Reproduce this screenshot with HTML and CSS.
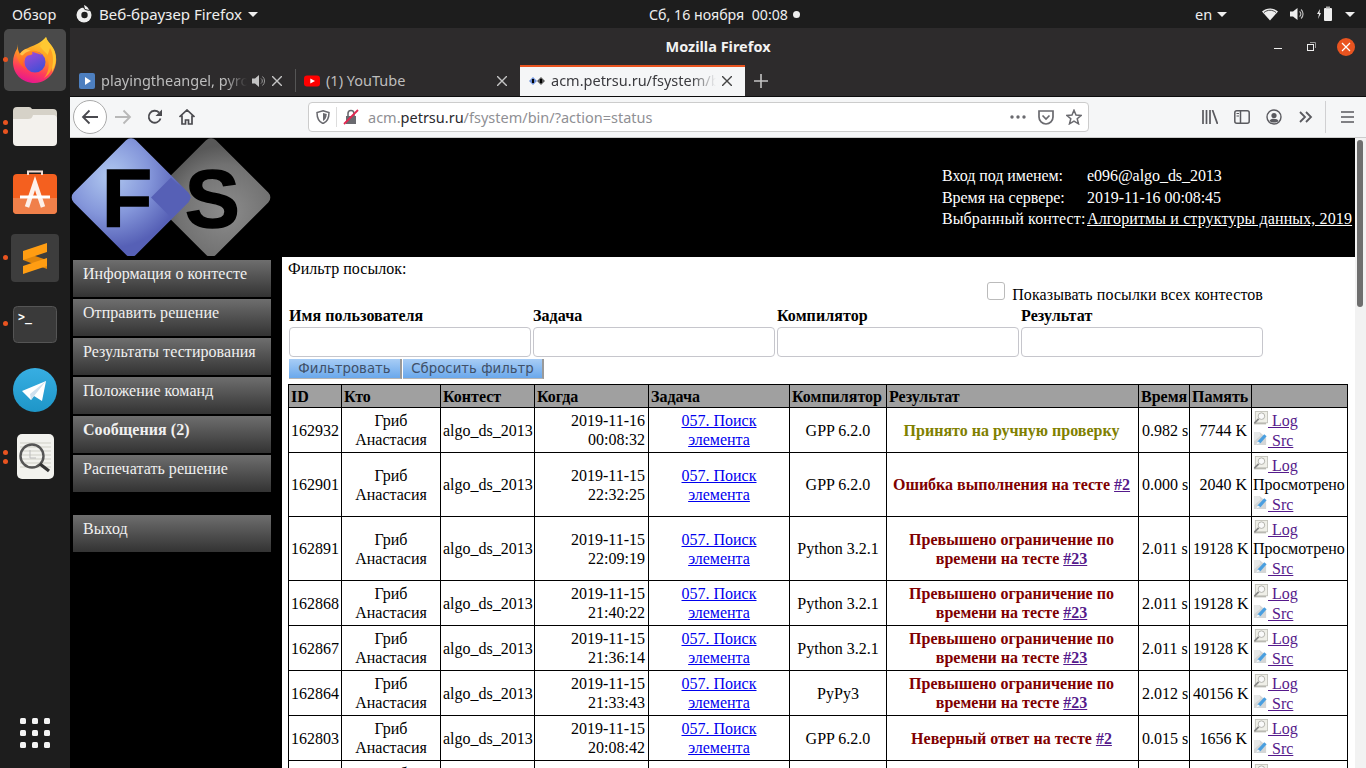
FILE: index.html
```html
<!doctype html>
<html lang="ru">
<head>
	<meta charset="UTF-8">
	<title>Mozilla Firefox</title>
	<link rel="stylesheet" href="styles.css">
</head>
<body>
<!-- shared page icons -->
<svg class="sprite" width="0" height="0">
	<symbol id="ico-log" viewBox="0 0 16 16">
		<rect x="2.5" y="0.5" width="13" height="12" fill="#efefe8" stroke="#c4c4bc"/>
		<circle cx="9" cy="5.500" r="3.500" fill="#fafafa" stroke="#b0b0aa"/>
		<path d="M1 13.500h13" stroke="#b9b9b2" stroke-width="1.500"/>
		<path d="M6 8.500 1.500 13" stroke="#858585" stroke-width="1.800"/>
	</symbol>
	<symbol id="ico-src" viewBox="0 0 16 16">
		<path d="M1 1h6l7 6v8H1z" fill="#d4d6d6"/>
		<path d="M1 1h6l1 4-7 6z" fill="#e6e8e8"/>
		<path d="M5 11 12 3.500l2.500 2L8 13l-3.500 1z" fill="#4a9fe0"/>
		<path d="M3.500 14.500 5 11l3 2z" fill="#f4f4f4"/>
	</symbol>
</svg>

<!-- ubuntu top panel -->
<div class="panel">
	<div class="panel-left">
		<span class="overview">Обзор</span>
		<svg class="app-ico" width="18" height="18" viewBox="0 0 18 18"><circle cx="9" cy="10" r="7.5" fill="#eee"/><circle cx="9.5" cy="10" r="3.2" fill="#1d1d1d"/><path d="M7 1c3 0 7 1 8 5l-5-1z" fill="#1d1d1d"/><path d="M9 0c2 1 4 2 5 5l-4-1z" fill="#eee"/></svg>
		<span class="app-name">Веб-браузер Firefox</span>
		<span class="caret"></span>
	</div>
	<div class="panel-clock">Сб, 16 ноября&nbsp; 00:08<span class="clock-dot"></span></div>
	<div class="panel-right">
		<span class="lang">en</span>
		<span class="caret caret-lang"></span>
		<svg class="tray-wifi" width="16" height="14" viewBox="0 0 16 14"><path d="M0 4.500C4.500.5 11.500.5 16 4.500L8 13.500z" fill="#eee"/><path d="M2 5.500c3.500-3 8.500-3 12 0" fill="none" stroke="#1d1d1d" stroke-width=".8"/></svg>
		<svg class="tray-vol" width="16" height="14" viewBox="0 0 16 14"><path d="M0 4.500h3L7.500 1v12L3 9.500H0z" fill="#eee"/><path d="M9.500 4.500a3 3 0 0 1 0 5M11 2.500a6 6 0 0 1 0 9" fill="none" stroke="#bbb" stroke-width="1.200"/></svg>
		<svg class="tray-bat" width="16" height="16" viewBox="0 0 16 16"><path d="M3 3 0 8h2l-1 5 3-6H2.500z" fill="#eee"/><rect x="7" y="2" width="8" height="13" rx="1" fill="#eee"/><rect x="9" y="0.500" width="4" height="2" fill="#aaa"/></svg>
		<span class="caret caret-end"></span>
	</div>
</div>

<div class="desk">
	<!-- dock -->
	<div class="dock">
		<div class="dock-item dock-active">
			<span class="pip"></span>
			<svg width="46" height="48" viewBox="0 0 46 48">
				<defs>
					<linearGradient id="ff-out" x1=".7" y1="0" x2=".4" y2="1"><stop offset="0" stop-color="#ffd83a"/><stop offset=".42" stop-color="#ff9a1e"/><stop offset=".75" stop-color="#ff3b5c"/><stop offset="1" stop-color="#e5178f"/></linearGradient>
					<linearGradient id="ff-in" x1=".2" y1="0" x2=".7" y2="1"><stop offset="0" stop-color="#a04bd8"/><stop offset="1" stop-color="#3f4fd6"/></linearGradient>
					<linearGradient id="ff-fox" x1=".3" y1="0" x2=".5" y2="1"><stop offset="0" stop-color="#ffa52a"/><stop offset="1" stop-color="#ff5220"/></linearGradient>
				</defs>
				<path d="M34 1c1 5 7 8 9 15 4 12-2 30-20 31C9 47 1 37 1 26c0-5 2-10 4-13 0 3 1 5 2 6 3-5 7-6 11-8 5-2 11-4 16-10z" fill="url(#ff-out)"/>
				<path d="M34 1c1 5 7 9 9 16 2 7 0 14-3 19 1-8-1-15-7-20-2-2-4-4-5-6 3-2 5-5 6-9z" fill="#ffc832"/>
				<path d="M38 12c3 5 4 12 2 20-2 5-5 8-8 10 5-6 6-14 3-21z" fill="#ff9f24"/>
				<circle cx="23" cy="26" r="10.500" fill="url(#ff-in)"/>
				<path d="M6 8c-1 3 0 7 2 10 2-3 4-4 6-5 3 1 5 2 7 3l9 3c-3-4-8-5-11-4 2 2 2 3 0 4-3 0-5 1-6 3-4 5-1 9 3 12C8 31 2 21 6 8z" fill="url(#ff-fox)"/>
				<path d="M8 18c2-3 4-4 6-5 2 1 4 1 5 2-3 0-5 1-8 4-1 1-2 0-3-1z" fill="#ffc24a"/>
			</svg>
		</div>
		<div class="dock-item">
			<span class="pip pip-two"></span>
			<svg width="46" height="42" viewBox="0 0 46 42">
				<path d="M1 6a4 4 0 0 1 4-4h12a4 4 0 0 1 3 2h21a4 4 0 0 1 4 4v8H1z" fill="#d6d2c8"/>
				<path d="M1 14h15c3 0 4-1 5-4h20a4 4 0 0 1 4 4v23a4 4 0 0 1-4 4H5a4 4 0 0 1-4-4z" fill="#f3f1ed"/>
			</svg>
		</div>
		<div class="dock-item">
			<svg width="46" height="44" viewBox="0 0 46 44">
				<rect x="1" y="4" width="44" height="40" rx="4" fill="#f4601f"/>
				<path d="M1 28h44v12a4 4 0 0 1-4 4H5a4 4 0 0 1-4-4z" fill="#f0804a"/>
				<path d="M16 5V1.500h14V5" fill="none" stroke="#f2dcd2" stroke-width="2"/>
				<path d="M15 37 23 13l8 24" fill="none" stroke="#fdf0ea" stroke-width="4.500"/>
				<path d="M8 27h30" stroke="#fff" stroke-width="3"/>
			</svg>
		</div>
		<div class="dock-item">
			<span class="pip"></span>
			<svg width="48" height="48" viewBox="0 0 48 48">
				<rect width="48" height="48" rx="4" fill="#3d3d3d"/>
				<path d="M12 18 36 26v9L12 26z" fill="#e0860c"/>
				<path d="M12 17 36 9v9L12 26z" fill="#ff9d12"/>
				<path d="M12 32 36 24v8L12 40z" fill="#ff9d12"/>
			</svg>
		</div>
		<div class="dock-item">
			<span class="pip"></span>
			<svg width="44" height="37" viewBox="0 0 44 37">
				<rect x=".5" y=".5" width="43" height="36" rx="4" fill="#3a3a3a" stroke="#555"/>
				<text x="5" y="15" class="term-text">&gt;_</text>
			</svg>
		</div>
		<div class="dock-item">
			<svg width="44" height="44" viewBox="0 0 44 44">
				<defs><linearGradient id="tg" x1="0" y1="0" x2="0" y2="1"><stop offset="0" stop-color="#37aee2"/><stop offset="1" stop-color="#1e96c8"/></linearGradient></defs>
				<circle cx="22" cy="22" r="22" fill="url(#tg)"/>
				<path d="M9 23 33 13l-4 20-8-5-3 4z" fill="#fff"/>
				<path d="M17 26 33 13 21 28l-3 4z" fill="#cfe0ee"/>
			</svg>
		</div>
		<div class="dock-item">
			<span class="pip pip-two"></span>
			<svg width="37" height="45" viewBox="0 0 37 45">
				<rect width="37" height="45" rx="5" fill="#f2f2ee"/>
				<path d="M3 9h31M3 13h31M3 17h31M3 21h31M3 25h31M3 29h31M3 33h31" stroke="#cfcfc6"/>
				<circle cx="15" cy="22" r="11.500" fill="none" stroke="#555" stroke-width="2.400"/>
				<path d="M23 30l9 7" stroke="#333" stroke-width="3.200"/>
				<path d="M13 16v8h6" fill="none" stroke="#bbb"/>
			</svg>
		</div>
		<div class="dock-item dock-apps">
			<svg width="30" height="30" viewBox="0 0 30 30" fill="#f4f4f4">
				<rect width="6" height="6" rx="1.500"/><rect x="12" width="6" height="6" rx="1.500"/><rect x="24" width="6" height="6" rx="1.500"/>
				<rect y="12" width="6" height="6" rx="1.500"/><rect x="12" y="12" width="6" height="6" rx="1.500"/><rect x="24" y="12" width="6" height="6" rx="1.500"/>
				<rect y="24" width="6" height="6" rx="1.500"/><rect x="12" y="24" width="6" height="6" rx="1.500"/><rect x="24" y="24" width="6" height="6" rx="1.500"/>
			</svg>
		</div>
	</div>

	<!-- firefox window -->
	<div class="ff">
		<div class="titlebar">
			<span></span>
			<span class="win-title">Mozilla Firefox</span>
			<div class="win-btns">
				<span class="win-min"></span>
				<svg class="win-max" width="9" height="9" viewBox="0 0 9 9"><rect x=".5" y="2.500" width="6" height="6" fill="none" stroke="#eee"/><path d="M3 .5h5.500V6" fill="none" stroke="#999"/></svg>
				<span class="win-close">
					<svg width="10" height="10" viewBox="0 0 10 10"><path d="M1 1l8 8M9 1 1 9" stroke="#fff" stroke-width="1.200"/></svg>
				</span>
			</div>
		</div>
		<div class="tabs">
			<div class="tab">
				<svg width="16" height="16" viewBox="0 0 16 16"><rect width="16" height="16" rx="2" fill="#4d7fc0"/><path d="M6 4l6 4-6 4z" fill="#fff"/></svg>
				<span class="tab-label">playingtheangel, pyrokinesis</span>
				<svg class="tab-sound" width="14" height="14" viewBox="0 0 14 14"><path d="M0 4.500h3L7 1v12L3 9.500H0z" fill="#c4c4c4"/><path d="M9 4.500a3 3 0 0 1 0 5M10.500 2.500a6 6 0 0 1 0 9" fill="none" stroke="#999"/></svg>
				<svg class="tab-x" width="10" height="10" viewBox="0 0 10 10"><path d="M0 0l10 10M10 0 0 10" stroke="#c4c4c4" stroke-width="1.400"/></svg>
			</div>
			<div class="tab tab-sep">
				<svg width="16" height="16" viewBox="0 0 16 16"><rect y="2.500" width="16" height="11" rx="3" fill="#f00"/><path d="M6.300 5.500 11 8l-4.700 2.500z" fill="#fff"/></svg>
				<span class="tab-label">(1) YouTube</span>
				<svg class="tab-x" width="10" height="10" viewBox="0 0 10 10"><path d="M0 0l10 10M10 0 0 10" stroke="#c4c4c4" stroke-width="1.400"/></svg>
			</div>
			<div class="tab tab-on">
				<svg width="16" height="16" viewBox="0 0 16 16"><path d="M0 8l4-4 4 4-4 4z" fill="#6d8fd8"/><path d="M8 8l4-4 4 4-4 4z" fill="#5c5c5c"/><rect x="3" y="6" width="2" height="4"/><rect x="11" y="6" width="2" height="4"/></svg>
				<span class="tab-label">acm.petrsu.ru/fsystem/bin/?action=status</span>
				<svg class="tab-x" width="10" height="10" viewBox="0 0 10 10"><path d="M0 0l10 10M10 0 0 10" stroke="#444" stroke-width="1.400"/></svg>
			</div>
			<svg class="tab-new" width="14" height="14" viewBox="0 0 14 14"><path d="M7 0v14M0 7h14" stroke="#c4c4c4" stroke-width="1.600"/></svg>
		</div>
		<div class="nav">
			<div class="nav-back">
				<svg width="18" height="16" viewBox="0 0 18 16"><path d="M17 8H2M8.500 1.500 2 8l6.500 6.500" fill="none" stroke="#4a4a4f" stroke-width="1.800"/></svg>
			</div>
			<div class="nav-slot">
				<svg width="18" height="16" viewBox="0 0 18 16"><path d="M1 8h15M9.500 1.500 16 8l-6.500 6.500" fill="none" stroke="#b8b8b8" stroke-width="1.800"/></svg>
			</div>
			<div class="nav-slot">
				<svg width="16" height="16" viewBox="0 0 16 16"><path d="M13.500 9.500A6 6 0 1 1 12 3.500" fill="none" stroke="#4a4a4f" stroke-width="1.800"/><path d="M15 0.500v6.500H8.500z" fill="#4a4a4f"/></svg>
			</div>
			<div class="nav-slot">
				<svg width="16" height="16" viewBox="0 0 16 16"><path d="M.5 8 8 1l7.500 7M3 6.500V15h3.500v-4h3v4H13V6.500" fill="none" stroke="#4a4a4f" stroke-width="1.700"/></svg>
			</div>
			<div class="urlbar">
				<svg class="url-shield" width="14" height="14" viewBox="0 0 14 14"><path d="M7 .8 13 2.500c0 6-2 9.500-6 11-4-1.500-6-5-6-11z" fill="none" stroke="#6a6a6f" stroke-width="1.500"/><path d="M7 3v8c2-1 3.500-3 3.800-7z" fill="#6a6a6f"/></svg>
				<span class="url-sep"></span>
				<svg class="url-lock" width="16" height="16" viewBox="0 0 16 16"><path d="M3 7h10v8H3z" fill="#6a6a6f"/><path d="M5 7V4.500a3 3 0 0 1 6 0V7" fill="none" stroke="#6a6a6f" stroke-width="1.600"/><path d="M1 15 15 1" stroke="#e22850" stroke-width="1.800"/></svg>
				<span class="url-text">acm.<b>petrsu.ru</b>/fsystem/bin/?action=status</span>
				<svg class="url-dots" width="16" height="4" viewBox="0 0 16 4" fill="#6a6a6f"><circle cx="2" cy="2" r="1.700"/><circle cx="8" cy="2" r="1.700"/><circle cx="14" cy="2" r="1.700"/></svg>
				<svg class="url-pocket" width="16" height="15" viewBox="0 0 16 15"><path d="M1 1h14v6a7 7 0 0 1-14 0z" fill="none" stroke="#6a6a6f" stroke-width="1.700"/><path d="M4.500 5.500 8 9l3.500-3.500" fill="none" stroke="#6a6a6f" stroke-width="1.700"/></svg>
				<svg class="url-star" width="16" height="16" viewBox="0 0 16 16"><path d="M8 1.200 10 6l5.200.4-4 3.400 1.300 5L8 12.100l-4.500 2.700 1.300-5-4-3.400L6 6z" fill="none" stroke="#6a6a6f" stroke-width="1.500"/></svg>
			</div>
			<div class="nav-slot nav-first">
				<svg width="16" height="14" viewBox="0 0 16 14"><path d="M1 0v14M4.500 0v14M8 0v14M10.500 0l5 14" stroke="#5a5a5f" stroke-width="1.700"/></svg>
			</div>
			<div class="nav-slot">
				<svg width="16" height="14" viewBox="0 0 16 14"><rect x=".8" y=".8" width="14.400" height="12.400" rx="2" fill="none" stroke="#5a5a5f" stroke-width="1.500"/><path d="M6.500 1v12" stroke="#5a5a5f" stroke-width="1.500"/><path d="M2.500 3.500h2.500M2.500 6h2.500" stroke="#5a5a5f"/></svg>
			</div>
			<div class="nav-slot">
				<svg width="16" height="16" viewBox="0 0 16 16"><circle cx="8" cy="8" r="7" fill="none" stroke="#5a5a5f" stroke-width="1.400"/><circle cx="8" cy="6.500" r="2.600" fill="#5a5a5f"/><path d="M3.500 12c1-3 8-3 9 0-2 2-7 2-9 0z" fill="#5a5a5f"/></svg>
			</div>
			<div class="nav-slot">
				<svg width="14" height="12" viewBox="0 0 14 12"><path d="M1 1l5 5-5 5M7 1l5 5-5 5" fill="none" stroke="#5a5a5f" stroke-width="1.800"/></svg>
			</div>
			<span class="nav-sep"></span>
			<div class="nav-slot">
				<svg width="13" height="12" viewBox="0 0 13 12"><path d="M0 1h13M0 6h13M0 11h13" stroke="#5a5a5f" stroke-width="1.700"/></svg>
			</div>
		</div>

		<!-- page content -->
		<div class="viewport">
			<div class="page">
				<div class="head">
					<svg class="logo" width="200" height="118" viewBox="0 0 200 118">
						<defs>
							<radialGradient id="lg-blue" gradientUnits="userSpaceOnUse" cx="30" cy="59" r="72"><stop offset="0" stop-color="#b0c8f0"/><stop offset=".55" stop-color="#8496da"/><stop offset="1" stop-color="#5660b6"/></radialGradient>
							<radialGradient id="lg-gray" gradientUnits="userSpaceOnUse" cx="160" cy="59" r="66"><stop offset="0" stop-color="#8c8c8c"/><stop offset=".7" stop-color="#727272"/><stop offset="1" stop-color="#585858"/></radialGradient>
						</defs>
						<rect x="96" y="15.500" width="88" height="88" rx="7" transform="rotate(45 140 59.500)" fill="url(#lg-gray)"/>
						<rect x="16" y="15.500" width="88" height="88" rx="7" transform="rotate(45 60 59.500)" fill="url(#lg-blue)"/>
						<path d="M100 39.500 120 59.500 100 79.500 80 59.500z" fill="#5660b6"/>
						<text x="31" y="89" class="logo-text">F</text>
						<text x="114" y="89" class="logo-text">S</text>
					</svg>
					<div class="who">
						<span>Вход под именем:</span><span>e096@algo_ds_2013</span>
						<span>Время на сервере:</span><span>2019-11-16 00:08:45</span>
						<span class="who-wide">Выбранный контест:</span><a href="#">Алгоритмы и структуры данных, 2019</a>
					</div>
				</div>
				<div class="body-row">
					<div class="menu">
						<a class="menu-item" href="#">Информация о контесте</a>
						<a class="menu-item" href="#">Отправить решение</a>
						<a class="menu-item" href="#">Результаты тестирования</a>
						<a class="menu-item" href="#">Положение команд</a>
						<a class="menu-item menu-bold" href="#">Сообщения (2)</a>
						<a class="menu-item" href="#">Распечатать решение</a>
						<a class="menu-item menu-exit" href="#">Выход</a>
					</div>
					<div class="main">
						<div class="filter-title">Фильтр посылок:</div>
						<div class="all-row"><span class="chk"></span>Показывать посылки всех контестов</div>
						<div class="filter-grid">
							<div class="field"><b>Имя пользователя</b><span class="inp"></span></div>
							<div class="field"><b>Задача</b><span class="inp"></span></div>
							<div class="field"><b>Компилятор</b><span class="inp"></span></div>
							<div class="field"><b>Результат</b><span class="inp"></span></div>
						</div>
						<div class="btns">
							<span class="btn btn-go">Фильтровать</span><span class="btn btn-reset">Сбросить фильтр</span>
						</div>
						<table class="runs">
							<colgroup>
								<col class="c-id"><col class="c-who"><col class="c-cont"><col class="c-when"><col class="c-task"><col class="c-comp"><col class="c-res"><col class="c-time"><col class="c-mem"><col class="c-act">
							</colgroup>
							<tr><th>ID</th><th>Кто</th><th>Контест</th><th>Когда</th><th>Задача</th><th>Компилятор</th><th>Результат</th><th>Время</th><th>Память</th><th></th></tr>
							<tr>
								<td class="num">162932</td><td class="mid">Гриб Анастасия</td><td class="mid cont">algo_ds_2013</td><td class="rt">2019-11-16<br>00:08:32</td><td class="mid"><a href="#">057. Поиск элемента</a></td><td class="mid">GPP 6.2.0</td><td class="res ok">Принято на ручную проверку</td><td class="rt tight">0.982 s</td><td class="rt tight">7744 K</td>
								<td class="act"><div class="act-line"><svg><use href="#ico-log"/></svg><a class="seen" href="#">&nbsp;Log</a></div><div class="act-line"><svg><use href="#ico-src"/></svg><a class="seen" href="#">&nbsp;Src</a></div></td>
							</tr>
							<tr>
								<td class="num">162901</td><td class="mid">Гриб Анастасия</td><td class="mid cont">algo_ds_2013</td><td class="rt">2019-11-15<br>22:32:25</td><td class="mid"><a href="#">057. Поиск элемента</a></td><td class="mid">GPP 6.2.0</td><td class="res bad">Ошибка выполнения на тесте <a class="seen" href="#">#2</a></td><td class="rt tight">0.000 s</td><td class="rt tight">2040 K</td>
								<td class="act"><div class="act-line"><svg><use href="#ico-log"/></svg><a class="seen" href="#">&nbsp;Log</a></div><div class="act-note">Просмотрено</div><div class="act-line"><svg><use href="#ico-src"/></svg><a class="seen" href="#">&nbsp;Src</a></div></td>
							</tr>
							<tr>
								<td class="num">162891</td><td class="mid">Гриб Анастасия</td><td class="mid cont">algo_ds_2013</td><td class="rt">2019-11-15<br>22:09:19</td><td class="mid"><a href="#">057. Поиск элемента</a></td><td class="mid">Python 3.2.1</td><td class="res bad">Превышено ограничение по времени на тесте <a class="seen" href="#">#23</a></td><td class="rt tight">2.011 s</td><td class="rt tight">19128 K</td>
								<td class="act"><div class="act-line"><svg><use href="#ico-log"/></svg><a class="seen" href="#">&nbsp;Log</a></div><div class="act-note">Просмотрено</div><div class="act-line"><svg><use href="#ico-src"/></svg><a class="seen" href="#">&nbsp;Src</a></div></td>
							</tr>
							<tr>
								<td class="num">162868</td><td class="mid">Гриб Анастасия</td><td class="mid cont">algo_ds_2013</td><td class="rt">2019-11-15<br>21:40:22</td><td class="mid"><a href="#">057. Поиск элемента</a></td><td class="mid">Python 3.2.1</td><td class="res bad">Превышено ограничение по времени на тесте <a class="seen" href="#">#23</a></td><td class="rt tight">2.011 s</td><td class="rt tight">19128 K</td>
								<td class="act"><div class="act-line"><svg><use href="#ico-log"/></svg><a class="seen" href="#">&nbsp;Log</a></div><div class="act-line"><svg><use href="#ico-src"/></svg><a class="seen" href="#">&nbsp;Src</a></div></td>
							</tr>
							<tr>
								<td class="num">162867</td><td class="mid">Гриб Анастасия</td><td class="mid cont">algo_ds_2013</td><td class="rt">2019-11-15<br>21:36:14</td><td class="mid"><a href="#">057. Поиск элемента</a></td><td class="mid">Python 3.2.1</td><td class="res bad">Превышено ограничение по времени на тесте <a class="seen" href="#">#23</a></td><td class="rt tight">2.011 s</td><td class="rt tight">19128 K</td>
								<td class="act"><div class="act-line"><svg><use href="#ico-log"/></svg><a class="seen" href="#">&nbsp;Log</a></div><div class="act-line"><svg><use href="#ico-src"/></svg><a class="seen" href="#">&nbsp;Src</a></div></td>
							</tr>
							<tr>
								<td class="num">162864</td><td class="mid">Гриб Анастасия</td><td class="mid cont">algo_ds_2013</td><td class="rt">2019-11-15<br>21:33:43</td><td class="mid"><a href="#">057. Поиск элемента</a></td><td class="mid">PyPy3</td><td class="res bad">Превышено ограничение по времени на тесте <a class="seen" href="#">#23</a></td><td class="rt tight">2.012 s</td><td class="rt tight">40156 K</td>
								<td class="act"><div class="act-line"><svg><use href="#ico-log"/></svg><a class="seen" href="#">&nbsp;Log</a></div><div class="act-line"><svg><use href="#ico-src"/></svg><a class="seen" href="#">&nbsp;Src</a></div></td>
							</tr>
							<tr>
								<td class="num">162803</td><td class="mid">Гриб Анастасия</td><td class="mid cont">algo_ds_2013</td><td class="rt">2019-11-15<br>20:08:42</td><td class="mid"><a href="#">057. Поиск элемента</a></td><td class="mid">GPP 6.2.0</td><td class="res bad">Неверный ответ на тесте <a class="seen" href="#">#2</a></td><td class="rt tight">0.015 s</td><td class="rt tight">1656 K</td>
								<td class="act"><div class="act-line"><svg><use href="#ico-log"/></svg><a class="seen" href="#">&nbsp;Log</a></div><div class="act-line"><svg><use href="#ico-src"/></svg><a class="seen" href="#">&nbsp;Src</a></div></td>
							</tr>
							<tr>
								<td class="num">162802</td><td class="mid">Гриб Анастасия</td><td class="mid cont">algo_ds_2013</td><td class="rt">2019-11-15<br>20:05:10</td><td class="mid"><a href="#">057. Поиск элемента</a></td><td class="mid">GPP 6.2.0</td><td class="res bad">Неверный ответ на тесте <a class="seen" href="#">#2</a></td><td class="rt tight">0.015 s</td><td class="rt tight">1656 K</td>
								<td class="act"><div class="act-line"><svg><use href="#ico-log"/></svg><a class="seen" href="#">&nbsp;Log</a></div><div class="act-line"><svg><use href="#ico-src"/></svg><a class="seen" href="#">&nbsp;Src</a></div></td>
							</tr>
						</table>
					</div>
				</div>
			</div>
			<div class="scrollbar"><div class="thumb"></div></div>
		</div>
	</div>
</div>
</body>
</html>
```

FILE: styles.css
```css
html,body{
	margin:0; padding:0; height:100%; overflow:hidden;
}
body{
	display:flex; flex-direction:column; background:#000; font-family:"Liberation Serif",serif; font-size:16px; line-height:19px;
}
.sprite{ position:absolute; }

/* top panel */
.panel{
	height:28px; flex:none; display:flex; align-items:center; background:#1d1d1d; color:#eee; font-family:"Noto Sans",sans-serif; font-size:14.5px;
}
.panel-left{ width:649px; flex:none; display:flex; align-items:center; padding-left:12px; box-sizing:border-box; }
.overview{ width:63px; }
.app-name{ margin-left:6px; font-size:15.1px; white-space:nowrap; }
.app-ico{ margin-left:0; }
.caret{ width:0; height:0; border-left:5px solid transparent; border-right:5px solid transparent; border-top:5px solid #eee; margin-left:6px; }
.panel-clock{ flex:1; display:flex; align-items:center; white-space:nowrap; font-size:14.2px; }
.clock-dot{ width:7px; height:7px; border-radius:50%; background:#eee; margin-left:5px; }
.panel-right{ width:171px; flex:none; display:flex; align-items:center; }
.lang{ width:17px; }
.caret-lang{ margin-left:5px; }
.tray-wifi{ margin-left:35px; }
.tray-vol{ margin-left:12px; }
.tray-bat{ margin-left:11px; }
.caret-end{ margin-left:12px; }

/* dock */
.desk{ flex:1; display:flex; min-height:0; }
.dock{
	width:70px; flex:none; display:flex; flex-direction:column; gap:4px; padding:1px 4px 4px; box-sizing:border-box; background:#1d1d1d;
}
.dock-item{ height:62px; flex:none; display:flex; align-items:center; justify-content:center; position:relative; border-radius:5px; }
.dock-active{ background:#4a4a4a; }
.dock-apps{ margin-top:auto; }
.pip{ position:absolute; left:-1px; top:28px; width:5px; height:5px; border-radius:50%; background:#e95420; }
.pip-two{ top:25px; box-shadow:0 9px 0 #e95420; }
.term-text{ font-family:"DejaVu Sans Mono",monospace; font-weight:bold; font-size:11.5px; fill:#fff; }

/* firefox chrome */
.ff{ flex:1; min-width:0; display:flex; flex-direction:column; }
.titlebar{
	height:37px; flex:none; display:grid; grid-template-columns:1fr auto 1fr; align-items:center; background:#2d2b2c; color:#f2f2f2; font-family:"Noto Sans",sans-serif; font-size:14.5px; font-weight:bold;
}
.win-btns{ display:flex; align-items:center; justify-content:flex-end; padding-right:11px; }
.win-min{ width:8px; height:1px; background:#eee; margin-top:4px; }
.win-max{ margin-left:25px; }
.win-close{ width:18px; height:18px; border-radius:50%; background:#e95420; margin-left:21px; display:flex; align-items:center; justify-content:center; }
.tabs{
	height:31px; flex:none; display:flex; align-items:center; background:#2d2b2c; border-bottom:1px solid #0c0c0d; font-family:"Noto Sans",sans-serif; font-size:14.5px; color:#bdbdbd; box-sizing:content-box;
}
.tab{ width:225px; height:31px; flex:none; box-sizing:border-box; display:flex; align-items:center; padding:0 13px 0 9px; }
.tab-sep{ position:relative; }
.tab-sep::before{ content:""; position:absolute; left:0; top:4px; bottom:4px; width:1px; background:#555; }
.tab-label{
	flex:1; min-width:0; margin-left:6px; white-space:nowrap; overflow:hidden;
	-webkit-mask-image:linear-gradient(to right,#000 85%,transparent 100%); mask-image:linear-gradient(to right,#000 85%,transparent 100%);
}
.tab-sep .tab-label{ -webkit-mask-image:none; mask-image:none; }
.tab-sound{ margin:0 6px 0 5px; }
.tab-on{ background:#f5f6f7; border-top:2px solid #e95420; color:#3b3b3f; padding-bottom:2px; }
.tab-on .tab-x{ margin-left:6px; }
.tab-new{ margin-left:9px; }
.nav{
	height:41px; flex:none; box-sizing:border-box; display:flex; align-items:center; padding-left:3px; background:#f5f6f7; border-bottom:1px solid #ccc;
}
.nav-back{ width:32px; height:32px; border-radius:50%; background:#fff; border:1px solid #aaa; display:flex; align-items:center; justify-content:center; flex:none; }
.nav-slot{ width:32px; height:32px; flex:none; display:flex; align-items:center; justify-content:center; }
.urlbar{
	width:781px; height:30px; flex:none; box-sizing:border-box; margin-left:105px; display:flex; align-items:center; background:#fff; border:1px solid #ccc; border-radius:4px; font-family:"Noto Sans",sans-serif; font-size:14.5px; color:#8f8f94;
}
.url-shield{ margin-left:7px; }
.url-sep{ width:1px; height:20px; background:#ddd; margin-left:6px; }
.url-lock{ margin-left:6px; }
.url-text{ margin-left:9px; flex:1; white-space:nowrap; }
.url-text b{ font-weight:normal; color:#2a2a2e; }
.url-pocket{ margin-left:12px; }
.url-star{ margin:0 6px 0 12px; }
.nav-first{ margin-left:105px; }
.nav-sep{ width:1px; height:32px; background:#d0d0d2; margin:0 5px 0 3px; flex:none; }

/* page */
.viewport{ flex:1; min-height:0; display:flex; }
.page{ flex:1; min-width:0; overflow:hidden; background:#000; }
.scrollbar{ width:11px; flex:none; background:#f2f2f2; padding:2px 0 0 2px; box-sizing:border-box; }
.thumb{ width:6px; height:167px; border-radius:3px; background:#6e6e6e; }
.head{ height:119px; display:flex; justify-content:space-between; padding:0 3px 0 1px; color:#fff; }
.logo{ flex:none; }
.logo-text{ font-family:"Liberation Sans",sans-serif; font-weight:bold; font-size:82px; fill:#000; stroke:#000; stroke-width:1.5px; }
.who{ display:grid; grid-template-columns:145px 265px; grid-auto-rows:21.5px; padding-top:28.4px; white-space:nowrap; letter-spacing:-.05px; }
.who-wide{ letter-spacing:.1px; }
.who a{ color:#fff; letter-spacing:.12px; }
.body-row{ display:flex; }
.menu{ width:212px; flex:none; padding:3px 0 0 3px; box-sizing:border-box; display:flex; flex-direction:column; gap:2px; }
.menu-item{
	width:198px; height:37px; box-sizing:border-box; padding:4px 0 0 10px; background:linear-gradient(#6e6e6e,#333); color:#f0f0f0; text-decoration:none; letter-spacing:.05px;
}
.menu-bold{ font-weight:bold; }
.menu-exit{ margin-top:21px; }
.main{ flex:1; min-width:0; background:#fff; color:#000; padding:2px 0 0 6px; height:600px; }
.filter-title{ height:19px; letter-spacing:.03px; }
.all-row{ width:975px; height:26px; margin-bottom:2px; display:flex; align-items:flex-end; justify-content:flex-end; letter-spacing:.09px; }
.chk{ width:18px; height:18px; box-sizing:border-box; border:1px solid #bbb; border-radius:3px; margin:0 7px 4px 0; background:#fff; }
.filter-grid{ display:flex; gap:2px; padding-left:1px; }
.field{ width:242px; display:flex; flex-direction:column; letter-spacing:.07px; }
.inp{ height:30px; box-sizing:border-box; border:1px solid #c6c6cc; border-radius:4px; margin-top:2px; }
.btns{ display:flex; gap:1px; padding:2px 0 5px 1px; }
.btn{
	height:20px; box-sizing:border-box; display:flex; align-items:center; justify-content:center; font-family:"DejaVu Sans",sans-serif; font-size:13.3px; color:#3f5068; background:linear-gradient(#a8cdf5,#6aa8ec); border-right:2px solid #9a9a9a; border-bottom:1px solid #b5b5b5;
}
.btn-go{ width:113px; }
.btn-reset{ width:141px; }

/* submissions */
.runs{ width:1059px; table-layout:fixed; border-collapse:collapse; }
.c-id{ width:53px; }
.c-who{ width:99px; }
.c-cont{ width:94px; }
.c-when{ width:114px; }
.c-task{ width:141px; }
.c-comp{ width:97px; }
.c-res{ width:252px; }
.c-time{ width:51px; }
.c-mem{ width:62px; }
.c-act{ width:96px; }
.runs th{ border:1px solid #000; background:#a0a0a0; text-align:left; padding:2px 2px 1px 2px; white-space:nowrap; }
.runs td{ border:1px solid #000; padding:2px 3px; }
.runs td.num{ padding-left:2px; }
.mid{ text-align:center; }
.runs td.cont{ padding:2px 4px 2px 2px; white-space:nowrap; }
.rt{ text-align:right; white-space:nowrap; }
.runs td.tight{ padding-right:4px; }
.res{ text-align:center; font-weight:bold; }
.runs td.res{ padding:2px 4px 2px 2px; }
.ok{ color:#808000; }
.bad{ color:#800000; }
.runs a{ color:#00e; }
.runs a.seen{ color:#551a8b; }
.runs td.act{ padding:2px 0 2px 1px; white-space:nowrap; }
.act-line{ height:20px; line-height:21px; }
.act-line svg{ width:15px; height:15px; vertical-align:0; }
```
